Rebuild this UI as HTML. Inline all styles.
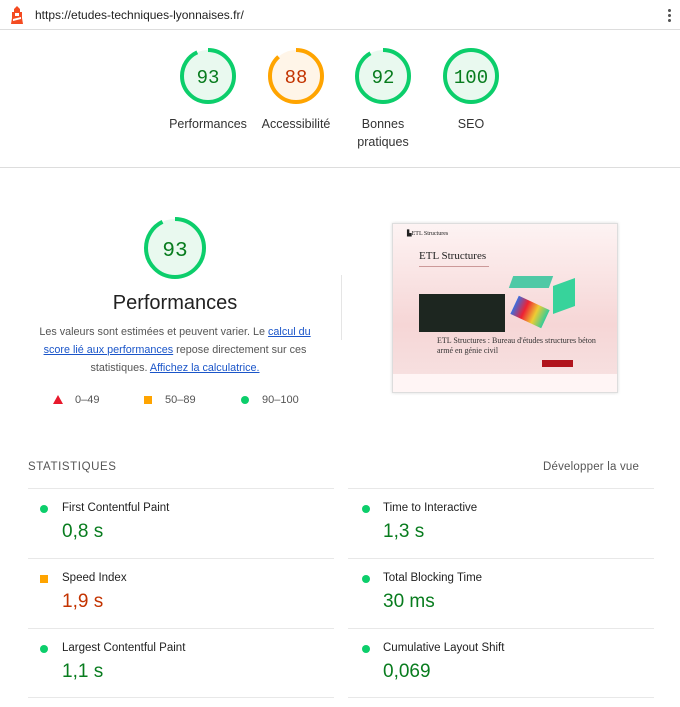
<!DOCTYPE html>
<html><head><meta charset="utf-8"><style>
*{margin:0;padding:0;box-sizing:border-box}
body{width:680px;height:707px;background:#fff;font-family:"Liberation Sans",Arial,sans-serif;color:#212121;position:relative;overflow:hidden}
.a{position:absolute}
.g{position:absolute;width:60px;height:60px}
.gl{position:absolute;width:100px;text-align:center;font-size:12.5px;color:#333;line-height:18px}
.hl{position:absolute;height:1px;background:#e8e8e8}
.lab{position:absolute;font-size:11.5px;color:#222}
.val{position:absolute;font-size:19px}
.dot{position:absolute;width:8px;height:8px;border-radius:50%;background:#0cce6b}
.sq{position:absolute;width:8px;height:8px;background:#ffa400}
a{color:#1a55c9}
</style></head><body>
<div class="a" style="left:0;top:0;width:680px;height:30px;border-bottom:1px solid #ddd;background:#fff"></div>
<svg class="a" style="left:10px;top:6px" width="14" height="18" viewBox="0 0 14 18"><path d="M4 3 L7 0 L10 3 V6 H12 V12 L13 18 H1 L2 12 V6 H4Z" fill="#f44b21"/><rect x="5" y="7" width="4" height="3" fill="#fff"/><path d="M3 13 L11 11 V13 L3 15Z" fill="#fff"/></svg>
<div class="a" style="left:35px;top:8px;font-size:12px;color:#222">https://etudes-techniques-lyonnaises.fr/</div>
<div class="a" style="left:668px;top:8px;width:3px;height:14px;background:radial-gradient(circle,#555 1.4px,transparent 1.6px) 0 0/3px 5px"></div>

<svg class="g" style="left:178px;top:46px" viewBox="0 0 60 60"><circle cx="30" cy="30" r="26" fill="#e9f9ef" stroke="#0cce6b" stroke-width="4" stroke-dasharray="152 200" transform="rotate(-90 30 30)"/><text x="30" y="37" text-anchor="middle" font-family="Liberation Mono,monospace" font-size="19" fill="#087c1e">93</text></svg>
<svg class="g" style="left:266px;top:46px" viewBox="0 0 60 60"><circle cx="30" cy="30" r="26" fill="#fff5e8" stroke="#ffa400" stroke-width="4" stroke-dasharray="144 200" transform="rotate(-90 30 30)"/><text x="30" y="37" text-anchor="middle" font-family="Liberation Mono,monospace" font-size="19" fill="#c33300">88</text></svg>
<svg class="g" style="left:353px;top:46px" viewBox="0 0 60 60"><circle cx="30" cy="30" r="26" fill="#e9f9ef" stroke="#0cce6b" stroke-width="4" stroke-dasharray="150 200" transform="rotate(-90 30 30)"/><text x="30" y="37" text-anchor="middle" font-family="Liberation Mono,monospace" font-size="19" fill="#087c1e">92</text></svg>
<svg class="g" style="left:441px;top:46px" viewBox="0 0 60 60"><circle cx="30" cy="30" r="26" fill="#e9f9ef" stroke="#0cce6b" stroke-width="4"/><text x="30" y="37" text-anchor="middle" font-family="Liberation Mono,monospace" font-size="19" fill="#087c1e">100</text></svg>
<div class="gl" style="left:158px;top:115px">Performances</div>
<div class="gl" style="left:246px;top:115px">Accessibilité</div>
<div class="gl" style="left:333px;top:115px">Bonnes<br>pratiques</div>
<div class="gl" style="left:421px;top:115px">SEO</div>
<div class="hl" style="left:0;top:167px;width:680px;background:#ddd"></div>

<svg class="a" style="left:142px;top:215px" width="66" height="66" viewBox="0 0 66 66"><circle cx="33" cy="33" r="29" fill="#e9f9ef" stroke="#0cce6b" stroke-width="4" stroke-dasharray="169 200" transform="rotate(-90 33 33)"/><text x="33" y="41" text-anchor="middle" font-family="Liberation Mono,monospace" font-size="21" fill="#087c1e">93</text></svg>
<div class="a" style="left:75px;top:292px;width:200px;text-align:center;font-size:20px;color:#212121">Performances</div>
<div class="a" style="left:35px;top:323px;width:280px;text-align:center;font-size:10.8px;line-height:18px;color:#555">Les valeurs sont estimées et peuvent varier. Le <a href="#">calcul du score lié aux performances</a> repose directement sur ces statistiques. <a href="#">Affichez la calculatrice.</a></div>
<svg class="a" style="left:53px;top:395px" width="10" height="9"><path d="M5 0 L10 9 H0Z" fill="#e8192c"/></svg>
<div class="a" style="left:75px;top:394px;font-size:11px;color:#555">0–49</div>
<div class="sq" style="left:144px;top:396px"></div>
<div class="a" style="left:165px;top:394px;font-size:11px;color:#555">50–89</div>
<div class="dot" style="left:241px;top:396px"></div>
<div class="a" style="left:262px;top:394px;font-size:11px;color:#555">90–100</div>
<div class="a" style="left:341px;top:275px;width:1px;height:65px;background:#e5e5e5"></div>

<div class="a" style="left:392px;top:223px;width:226px;height:170px;border:1px solid #ddd;box-shadow:0 0 3px rgba(0,0,0,.15);background:linear-gradient(#fdf3f3,#f6d6d6 60%,#f7e3e3);overflow:hidden">
<div class="a" style="left:14px;top:6px;font-size:6px;font-family:'Liberation Serif',serif">▙ETL Structures</div>
<div class="a" style="left:26px;top:26px;font-size:11px;font-family:'Liberation Serif',serif;color:#222">ETL Structures</div>
<div class="a" style="left:26px;top:42px;width:70px;height:1px;background:#c99"></div>
<div class="a" style="left:26px;top:70px;width:86px;height:38px;background:#1d2620"></div>
<div class="a" style="left:118px;top:52px;width:40px;height:12px;background:#4fc9a6;transform:skew(-20deg)"></div>
<div class="a" style="left:160px;top:58px;width:22px;height:28px;background:#37d39b;transform:skewY(-20deg)"></div>
<div class="a" style="left:120px;top:78px;width:34px;height:20px;background:linear-gradient(90deg,#3a6ee0,#e23,#ec3,#3c9);transform:rotate(25deg)"></div>
<div class="a" style="left:44px;top:112px;width:160px;font-size:8px;line-height:10px;font-family:'Liberation Serif',serif;color:#333">ETL Structures : Bureau d'études structures béton armé en génie civil</div>
<div class="a" style="left:149px;top:136px;width:31px;height:7px;background:#b1141d"></div>
<div class="a" style="left:0;top:150px;width:226px;height:20px;background:#fff5f5"></div>
</div>

<div class="a" style="left:28px;top:461px;font-size:11.5px;letter-spacing:.6px;color:#555">STATISTIQUES</div>
<div class="a" style="left:543px;top:461px;font-size:11.5px;letter-spacing:.2px;color:#555">Développer la vue</div>

<div class="hl" style="left:28px;top:488px;width:306px"></div><div class="hl" style="left:348px;top:488px;width:306px"></div>
<div class="hl" style="left:28px;top:558px;width:306px"></div><div class="hl" style="left:348px;top:558px;width:306px"></div>
<div class="hl" style="left:28px;top:628px;width:306px"></div><div class="hl" style="left:348px;top:628px;width:306px"></div>
<div class="hl" style="left:28px;top:697px;width:306px"></div><div class="hl" style="left:348px;top:697px;width:306px"></div>

<div class="dot" style="left:40px;top:505px"></div><div class="lab" style="left:62px;top:502px">First Contentful Paint</div><div class="val" style="left:62px;top:521px;color:#087c1e">0,8 s</div>
<div class="sq" style="left:40px;top:575px"></div><div class="lab" style="left:62px;top:572px">Speed Index</div><div class="val" style="left:62px;top:591px;color:#c33300">1,9 s</div>
<div class="dot" style="left:40px;top:645px"></div><div class="lab" style="left:62px;top:642px">Largest Contentful Paint</div><div class="val" style="left:62px;top:661px;color:#087c1e">1,1 s</div>

<div class="dot" style="left:362px;top:505px"></div><div class="lab" style="left:383px;top:502px">Time to Interactive</div><div class="val" style="left:383px;top:521px;color:#087c1e">1,3 s</div>
<div class="dot" style="left:362px;top:575px"></div><div class="lab" style="left:383px;top:572px">Total Blocking Time</div><div class="val" style="left:383px;top:591px;color:#087c1e">30 ms</div>
<div class="dot" style="left:362px;top:645px"></div><div class="lab" style="left:383px;top:642px">Cumulative Layout Shift</div><div class="val" style="left:383px;top:661px;color:#087c1e">0,069</div>
</body></html>
